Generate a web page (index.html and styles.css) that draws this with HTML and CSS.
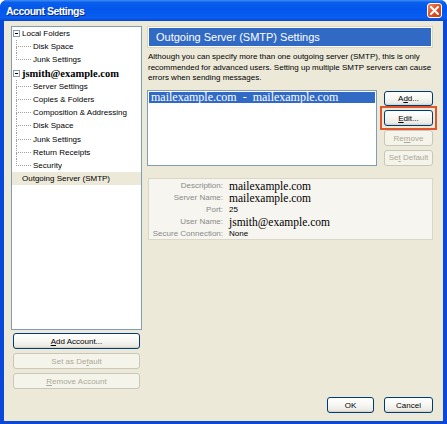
FILE: index.html
```html
<!DOCTYPE html>
<html>
<head>
<meta charset="utf-8">
<link rel="stylesheet" href="styles.css">
</head>
<body>
<div class="window">
  <div class="titlebar">
    <span class="title">Account Settings</span>
    <span class="close"><svg width="9" height="9" viewBox="0 0 9 9"><path d="M1 1 L8 8 M8 1 L1 8" stroke="#fff" stroke-width="2" stroke-linecap="square"/></svg></span>
  </div>
  <div class="client">
    <div class="main">
      <div class="left">
        <div class="tree">
          <div class="row top"><span class="exp"></span><span class="label">Local Folders</span></div>
          <div class="row child"><span class="branch"><i class="up"></i><i class="down"></i></span><span class="label">Disk Space</span></div>
          <div class="row child last"><span class="branch"><i class="up"></i><i class="down"></i></span><span class="label">Junk Settings</span></div>
          <div class="row top"><span class="exp"></span><span class="label acct">jsmith@example.com</span></div>
          <div class="row child"><span class="branch"><i class="up"></i><i class="down"></i></span><span class="label">Server Settings</span></div>
          <div class="row child"><span class="branch"><i class="up"></i><i class="down"></i></span><span class="label">Copies &amp; Folders</span></div>
          <div class="row child"><span class="branch"><i class="up"></i><i class="down"></i></span><span class="label">Composition &amp; Addressing</span></div>
          <div class="row child"><span class="branch"><i class="up"></i><i class="down"></i></span><span class="label">Disk Space</span></div>
          <div class="row child"><span class="branch"><i class="up"></i><i class="down"></i></span><span class="label">Junk Settings</span></div>
          <div class="row child"><span class="branch"><i class="up"></i><i class="down"></i></span><span class="label">Return Receipts</span></div>
          <div class="row child last"><span class="branch"><i class="up"></i><i class="down"></i></span><span class="label">Security</span></div>
          <div class="row top leaf selected"><span class="label">Outgoing Server (SMTP)</span></div>
        </div>
        <button class="btn wide first"><u>A</u>dd Account...</button>
        <button class="btn wide disabled">Set as De<u>f</u>ault</button>
        <button class="btn wide disabled"><u>R</u>emove Account</button>
      </div>
      <div class="right">
        <div class="header"><span>Outgoing Server (SMTP) Settings</span></div>
        <p class="desc">Although you can specify more than one outgoing server (SMTP), this is only recommended for advanced users. Setting up multiple SMTP servers can cause errors when sending messages.</p>
        <div class="servers">
          <div class="list">
            <div class="item sel">mailexample.com  -  mailexample.com</div>
          </div>
          <div class="side">
            <button class="btn side-btn">A<u>d</u>d...</button>
            <span class="mark"><button class="btn side-btn"><u>E</u>dit...</button></span>
            <button class="btn side-btn disabled">Re<u>m</u>ove</button>
            <button class="btn side-btn disabled">Se<u>t</u> Default</button>
          </div>
        </div>
        <div class="info">
          <span class="k">Description:</span><span class="v serif">mailexample.com</span>
          <span class="k">Server Name:</span><span class="v serif">mailexample.com</span>
          <span class="k">Port:</span><span class="v">25</span>
          <span class="k">User Name:</span><span class="v serif">jsmith@example.com</span>
          <span class="k">Secure Connection:</span><span class="v">None</span>
        </div>
      </div>
    </div>
    <div class="footer">
      <button class="btn ok">OK</button>
      <button class="btn cancel">Cancel</button>
    </div>
  </div>
</div>
</body>
</html>
```

FILE: styles.css
```css
* { box-sizing: border-box; }
body { margin: 0; background: #fff; }

.window {
  width: 447px;
  height: 424px;
  display: flex;
  flex-direction: column;
  background: #0A48DA;
  border-radius: 7px 7px 0 0;
  overflow: hidden;
  font-family: "Liberation Sans", Arial, sans-serif;
}

.titlebar {
  height: 21px;
  flex: none;
  display: flex;
  align-items: center;
  justify-content: space-between;
  padding: 0 5px 0 6px;
  background: linear-gradient(180deg, #3D8DF5 0%, #0A5EEB 12%, #0356EC 45%, #0A5DF0 85%, #0648D0 100%);
}
.title {
  color: #fff;
  font-family: "Liberation Sans", sans-serif;
  font-weight: bold;
  font-size: 10.5px;
  letter-spacing: -0.5px;
  text-shadow: 1px 1px 0 #0A2A8A;
}
.close {
  width: 15px;
  height: 15px;
  border: 1px solid #fff;
  border-radius: 3px;
  background: linear-gradient(135deg, #F08A66 0%, #E0542A 45%, #C83A10 100%);
  display: flex;
  align-items: center;
  justify-content: center;
}

.client {
  flex: 1;
  margin: 0 4px 3px 4px;
  background: #ECE9D8;
  padding: 5px 10px 0 7px;
  font-size: 8px;
  color: #000;
}

.main { display: flex; gap: 5px; }
.left { width: 131px; display: flex; flex-direction: column; }
.right { width: 286px; display: flex; flex-direction: column; }

.tree {
  height: 304px;
  border: 1px solid #7F9DB9;
  background: #fff;
}
.row {
  height: 13.2px;
  display: flex;
  align-items: stretch;
  white-space: nowrap;
}
.row .label { display: flex; align-items: center; }
.row.top { padding-left: 1px; }
.row.leaf { padding-left: 10px; }
.row.selected { background: #ECE9D8; }
.exp {
  width: 7px;
  height: 7px;
  align-self: center;
  border: 1px solid #8C9AB0;
  background: linear-gradient(#000,#000) center / 3px 1px no-repeat, #fff;
  margin-right: 2px;
}
.acct {
  font-family: "Liberation Serif", "Times New Roman", serif;
  font-weight: bold;
  font-size: 10.5px;
}
.row.child { padding-left: 4px; }
.branch {
  width: 17px;
  display: flex;
  flex-direction: column;
}
.branch i { flex: 1; display: block; border-left: 1px dotted #A0A0A0; }
.branch .up { border-bottom: 1px dotted #A0A0A0; margin-right: 2px; }
.row.last .branch .down { border-left-color: transparent; }

.btn {
  font-family: inherit;
  font-size: 8px;
  color: #000;
  height: 16px;
  padding: 0;
  border: 1px solid #003C74;
  border-radius: 3px;
  background: linear-gradient(180deg, #FFFFFF 0%, #F6F6F2 50%, #ECEBE5 85%, #D6D0C5 100%);
}
.btn u { text-decoration: underline; }
.btn.disabled {
  border-color: #C9C7BA;
  background: #F5F4EA;
  color: #ACA899;
}
.btn.wide { width: 127px; margin-left: 2px; margin-top: 4px; }
.btn.wide.first { margin-top: 3px; }

.header {
  height: 22px;
  border: 1px solid #DAD6C4;
  padding: 1px;
  background: #fff;
}
.header span {
  display: flex;
  align-items: center;
  height: 100%;
  background: #316AC5;
  color: #fff;
  font-size: 11px;
  padding-left: 7px;
}
.desc {
  margin: 4px 0 0 1px;
  line-height: 10.5px;
  font-size: 8px;
}
.servers {
  margin-top: 6px;
  height: 76px;
  display: flex;
  gap: 7px;
}
.list {
  width: 230px;
  border: 1px solid #7F9DB9;
  background: #fff;
  padding: 1px;
}
.item {
  height: 11px;
  display: flex;
  align-items: center;
  white-space: pre;
  font-family: "Liberation Serif", "Times New Roman", serif;
  font-size: 12px;
  padding-left: 2px;
}
.item.sel { background: #316AC5; color: #fff; }
.side {
  display: flex;
  flex-direction: column;
  gap: 4px;
  padding-top: 1px;
}
.side-btn { width: 49px; }
.mark {
  display: flex;
  width: 49px;
  outline: 2px solid #E0552E;
  outline-offset: 2px;
}

.info {
  margin: 12px 0 0 1px;
  height: 62px;
  border: 1px solid #DAD6C8;
  background: #F6F5EF;
  padding-top: 1px;
  display: grid;
  grid-template-columns: 74px 1fr;
  grid-auto-rows: 12px;
  column-gap: 6px;
  align-items: center;
}
.k { color: #8A8A8A; text-align: right; }
.v { color: #000; }
.v.serif {
  font-family: "Liberation Serif", "Times New Roman", serif;
  font-size: 11.5px;
}

.footer {
  margin-top: 8px;
  display: flex;
  justify-content: flex-end;
  gap: 10px;
}
.ok { width: 47px; }
.cancel { width: 49px; }
```
